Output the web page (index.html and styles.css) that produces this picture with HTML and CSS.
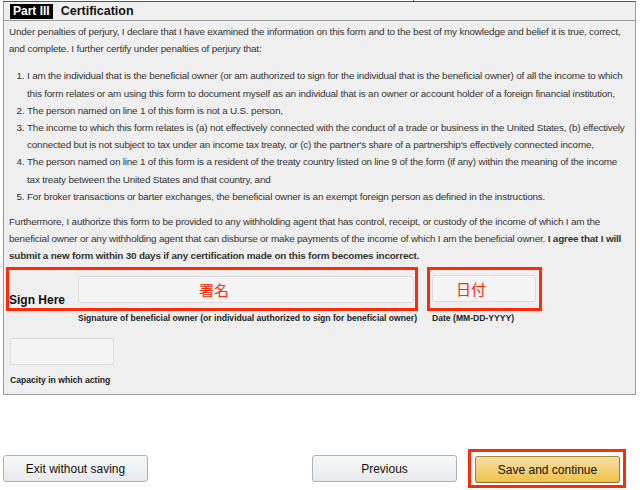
FILE: index.html
```html
<!DOCTYPE html>
<html lang="en">
<head>
    <meta charset="UTF-8">
    <meta name="viewport" content="width=device-width, initial-scale=1.0">
    <title>Certification</title>
    <link rel="stylesheet" href="styles.css">
</head>
<body>
<div class="topline"><span class="cell-a"></span><span class="cell-b"></span></div>
<section class="panel">
    <div class="part-head">
        <span class="part-tag">Part III</span>
        <span class="part-title">Certification</span>
    </div>
    <div class="part-body">
        <p>Under penalties of perjury, I declare that I have examined the information on this form and to the best of my knowledge and belief it is true, correct, and complete. I further certify under penalties of perjury that:</p>
        <ol class="items">
            <li>I am the individual that is the beneficial owner (or am authorized to sign for the individual that is the beneficial owner) of all the income to which this form relates or am using this form to document myself as an individual that is an owner or account holder of a foreign financial institution,</li>
            <li>The person named on line 1 of this form is not a U.S. person,</li>
            <li>The income to which this form relates is (a) not effectively connected with the conduct of a trade or business in the United States, (b) effectively connected but is not subject to tax under an income tax treaty, or (c) the partner's share of a partnership's effectively connected income,</li>
            <li>The person named on line 1 of this form is a resident of the treaty country listed on line 9 of the form (if any) within the meaning of the income tax treaty between the United States and that country, and</li>
            <li>For broker transactions or barter exchanges, the beneficial owner is an exempt foreign person as defined in the instructions.</li>
        </ol>
        <p>Furthermore, I authorize this form to be provided to any withholding agent that has control, receipt, or custody of the income of which I am the beneficial owner or any withholding agent that can disburse or make payments of the income of which I am the beneficial owner. <b>I agree that I will submit a new form within 30 days if any certification made on this form becomes incorrect.</b></p>

        <div class="sign-row">
            <div class="sign-col">
                <div class="mark sign-mark">
                    <span class="sign-label">Sign Here</span>
                    <div class="field sign-field">署名</div>
                </div>
                <div class="caption sign-caption">Signature of beneficial owner (or individual authorized to sign for beneficial owner)</div>
            </div>
            <div class="date-col">
                <div class="mark date-mark">
                    <div class="field date-field">日付</div>
                </div>
                <div class="caption date-caption">Date (MM-DD-YYYY)</div>
            </div>
        </div>

        <div class="field capacity-field"></div>
        <div class="caption capacity-caption">Capacity in which acting</div>
    </div>
</section>

<div class="actions">
    <button class="btn">Exit without saving</button>
    <div class="actions-right">
        <button class="btn">Previous</button>
        <div class="mark save-mark">
            <button class="btn btn-primary">Save and continue</button>
        </div>
    </div>
</div>
</body>
</html>
```

FILE: styles.css
```css
body {
    margin: 0;
    font-family: 'Liberation Sans', Arial, sans-serif;
    color: #333;
    background-color: #fff;
    width: 640px;
}
.topline {
    display: flex;
    height: 2px;
    margin: 0 4px 0 3px;
}
.cell-a {
    width: 410px;
    border-right: 1px solid #555;
    border-bottom: 1px solid #555;
}
.cell-b {
    flex: 1;
    border-bottom: 1px solid #555;
}
.panel {
    margin: 0 4px 0 3px;
    background-color: #efefef;
    border: 1px solid #999;
    border-top: none;
    height: 393px;
    box-sizing: border-box;
}
.part-head {
    display: flex;
    align-items: center;
    height: 18px;
    border-bottom: 1px solid #999;
    padding-left: 6px;
}
.part-tag {
    background-color: #000;
    color: #fff;
    font-weight: bold;
    font-size: 12px;
    padding: 0 3px;
    line-height: 15px;
}
.part-title {
    font-weight: bold;
    font-size: 12.5px;
    color: #111;
    margin-left: 8px;
}
.part-body {
    padding: 2px 5px 0 5px;
    font-size: 9.9px;
    letter-spacing: -0.18px;
    line-height: 17.2px;
}
.part-body p {
    margin: 0;
}
.items {
    margin: 10px 0 8px 0;
    padding-left: 18px;
}
.sign-row {
    display: flex;
    margin-top: 2px;
    margin-left: -3px;
    letter-spacing: 0;
}
.mark {
    border: 3px solid #ff2a0a;
    box-sizing: border-box;
}
.sign-mark {
    width: 412px;
    height: 44px;
    display: flex;
    align-items: flex-start;
    padding: 6px 1px 0 0;
}
.sign-label {
    font-weight: bold;
    font-size: 12px;
    color: #111;
    width: 69px;
    align-self: flex-end;
    line-height: 14px;
    margin-bottom: 1px;
}
.field {
    background-color: #f4f4f4;
    border: 1px solid #dcdcdc;
    border-radius: 3px;
    box-sizing: border-box;
    height: 27px;
    color: #ff2a0a;
    font-family: 'Noto Sans CJK JP', sans-serif;
    font-size: 15px;
    line-height: 25px;
    text-align: center;
}
.sign-field {
    flex: 1;
    padding-right: 64px;
}
.date-col {
    margin-left: 9px;
}
.date-mark {
    width: 115px;
    height: 44px;
    padding: 5px 3px 0 2px;
}
.date-field {
    padding-right: 26px;
}
.caption {
    font-size: 8.6px;
    font-weight: bold;
    color: #222;
    line-height: 10px;
    margin-top: 2px;
    letter-spacing: 0;
}
.sign-caption {
    padding-left: 72px;
}
.date-caption {
    padding-left: 5px;
}
.capacity-field {
    width: 104px;
    height: 27px;
    margin-top: 15px;
    margin-left: 1px;
}
.capacity-caption {
    margin-top: 10px;
    margin-left: 1px;
}
.actions {
    display: flex;
    justify-content: space-between;
    align-items: center;
    padding: 0 14px 0 3px;
    margin-top: 54px;
}
.actions-right {
    display: flex;
    align-items: center;
    gap: 11px;
}
.btn {
    font-family: 'Liberation Sans', Arial, sans-serif;
    font-size: 12px;
    color: #111;
    width: 145px;
    height: 27px;
    border: 1px solid #adb1b8;
    border-radius: 3px;
    background: linear-gradient(#f7f8fa, #e7e9ec);
    cursor: pointer;
}
.save-mark {
    padding: 4px 3px 2px 4px;
}
.btn-primary {
    display: block;
    background: linear-gradient(#f7dfa5, #f0c14b);
    border-color: #a88734 #9c7e31 #846a29;
}
```
